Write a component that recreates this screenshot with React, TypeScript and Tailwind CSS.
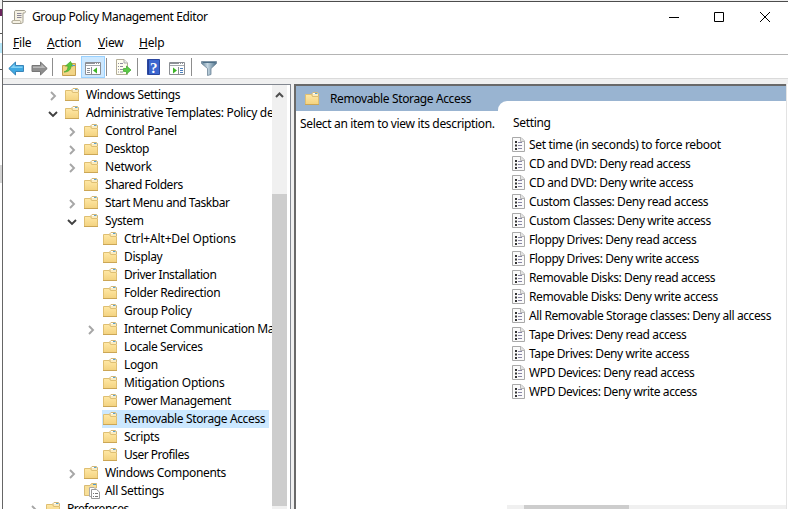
import React from 'react';

const Folder = () => (
  <svg width="14" height="14" viewBox="0 0 14 14" className="shrink-0">
    <defs>
      <linearGradient id="folderFill" x1="0" y1="0" x2="0" y2="1">
        <stop offset="0" stopColor="#ffe8a6" />
        <stop offset="1" stopColor="#f3d27f" />
      </linearGradient>
    </defs>
    <path d="M7 4V1.500L8 .5H12.500L13.500 1.500V4" fill="#faebc0" stroke="#d3b777" />
    <path d="M.5 2.500H6.500L7.500 4.500H13.500V12.500H.5Z" fill="url(#folderFill)" stroke="#dfbf72" />
    <path d="M8 1.500H10" stroke="#fff" />
    <path d="M10 1.500H12.500" stroke="#5ba3d0" />
    <path d="M0 12.500H14" stroke="#cba655" />
  </svg>
);

const SettingsFolder = () => (
  <svg width="17" height="16" viewBox="0 0 17 16" className="-mr-[3px] shrink-0">
    <path d="M.5 2.500H6L7.500.5H12.500V5H6V12.500H.5Z" fill="#f8df98" stroke="#d8bb76" />
    <path d="M9 1.500H12" stroke="#4c9bd2" />
    <path d="M5.500 4.500H10L12.500 7V13.500H5.500Z" fill="#fff" stroke="#aaa" />
    <path d="M7.500 6.500H12.500L15.500 9V15.500H7.500Z" fill="#fff" stroke="#999" />
    <path d="M9 10.500H10M11 10.500H14M9 13.500H10M11 13.500H14" stroke="#777" />
  </svg>
);

const Chevron = ({ open }: { open?: boolean }) =>
  open ? (
    <svg width="10" height="10" viewBox="0 0 10 10">
      <path d="M1 3L5 7L9 3" fill="none" stroke="#404040" strokeWidth="1.9" />
    </svg>
  ) : (
    <svg width="10" height="10" viewBox="0 0 10 10">
      <path d="M3 1L7 5L3 9" fill="none" stroke="#a6a6a6" strokeWidth="1.9" />
    </svg>
  );

const Sheet = () => (
  <svg width="13" height="15" viewBox="0 0 13 15" className="shrink-0">
    <path d="M.5.5H9L12.500 4V14.500H.5Z" fill="#fafafa" stroke="#a9a9a9" />
    <path d="M8.500.5V4.500H12.500" fill="#e4e4e4" stroke="#b5b5b5" />
    <path d="M3 5H5M3 8.500H5M3 12H5" stroke="#333" strokeWidth="2" />
    <path d="M6 5.500H10M6 8.500H10M6 11.500H10" stroke="#8987a5" />
  </svg>
);

type Node = { label: string; level: 0 | 1 | 2 | 3; arrow?: 'open' | 'closed'; spacing?: string; selected?: boolean; multi?: boolean };

const nodes: Node[] = [
  { label: 'Windows Settings', level: 1, arrow: 'closed' },
  { label: 'Administrative Templates: Policy definitions', level: 1, arrow: 'open', spacing: 'tracking-[-0.33px]' },
  { label: 'Control Panel', level: 2, arrow: 'closed', spacing: 'tracking-[-0.33px]' },
  { label: 'Desktop', level: 2, arrow: 'closed' },
  { label: 'Network', level: 2, arrow: 'closed', spacing: 'tracking-[-0.21px]' },
  { label: 'Shared Folders', level: 2, spacing: 'tracking-[-0.46px]' },
  { label: 'Start Menu and Taskbar', level: 2, arrow: 'closed', spacing: 'tracking-[-0.43px]' },
  { label: 'System', level: 2, arrow: 'open' },
  { label: 'Ctrl+Alt+Del Options', level: 3, spacing: 'tracking-[-0.16px]' },
  { label: 'Display', level: 3 },
  { label: 'Driver Installation', level: 3, spacing: 'tracking-[-0.46px]' },
  { label: 'Folder Redirection', level: 3 },
  { label: 'Group Policy', level: 3, spacing: 'tracking-[-0.3px]' },
  { label: 'Internet Communication Management', level: 3, arrow: 'closed', spacing: 'tracking-[-0.38px]' },
  { label: 'Locale Services', level: 3, spacing: 'tracking-[-0.42px]' },
  { label: 'Logon', level: 3 },
  { label: 'Mitigation Options', level: 3, spacing: 'tracking-[-0.27px]' },
  { label: 'Power Management', level: 3, spacing: 'tracking-[-0.46px]' },
  { label: 'Removable Storage Access', level: 3, selected: true },
  { label: 'Scripts', level: 3 },
  { label: 'User Profiles', level: 3, spacing: 'tracking-[-0.5px]' },
  { label: 'Windows Components', level: 2, arrow: 'closed', spacing: 'tracking-[-0.32px]' },
  { label: 'All Settings', level: 2, multi: true, spacing: 'tracking-[-0.3px]' },
  { label: 'Preferences', level: 0, arrow: 'closed', spacing: 'tracking-[-0.46px]' },
];

const indents = ['pl-[25px]', 'pl-[44px]', 'pl-[63px]', 'pl-[82px]'];

const settings = [
  'CD and DVD: Deny read access',
  'CD and DVD: Deny write access',
  'Custom Classes: Deny read access',
  'Custom Classes: Deny write access',
  'Floppy Drives: Deny read access',
  'Floppy Drives: Deny write access',
  'Removable Disks: Deny read access',
  'Removable Disks: Deny write access',
  'All Removable Storage classes: Deny all access',
  'Tape Drives: Deny read access',
  'Tape Drives: Deny write access',
  'WPD Devices: Deny read access',
  'WPD Devices: Deny write access',
];

const SettingRow = ({ label, spacing = 'tracking-[-0.395px]' }: { label: string; spacing?: string }) => (
  <div className="flex h-[19px] items-center gap-[4px] whitespace-nowrap pl-[5px]">
    <Sheet />
    <span className={spacing}>{label}</span>
  </div>
);

const Divider = () => <div className="h-[18px] w-px shrink-0 bg-[#8d8d8d]" />;

const WindowIcon = ({ flip }: { flip?: boolean }) => (
  <svg width="17" height="13" viewBox="0 0 17 13" className="shrink-0">
    <path d="M.5.5H15.500V12.500H.5Z" fill="#fff" stroke="#8c8f94" />
    <path d="M1 1.500H15" stroke="#8e9298" />
    <path d="M10 1.500H11M12 1.500H13M14 1.500H15" stroke="#fff" />
    <path d="M1 3.500H15" stroke="#a4a8ad" />
    {flip ? (
      <>
        <path d="M9.500 5V12" stroke="#8c8f94" />
        <path d="M4 5.500L8 8.500L4 11.500Z" fill="#3db526" />
        <path d="M11 6.500H14M11 8.500H14M11 10.500H14" stroke="#4a7fbd" />
      </>
    ) : (
      <>
        <path d="M6.500 5V12" stroke="#8c8f94" />
        <path d="M12 5.500L8 8.500L12 11.500Z" fill="#3db526" />
        <path d="M2 6.500H5M2 8.500H5M2 10.500H5" stroke="#8c8f94" />
      </>
    )}
  </svg>
);

function Toolbar() {
  return (
    <div className="flex h-[22px] shrink-0 items-center pl-[5px]">
      <svg width="17" height="15" viewBox="0 0 17 15" className="mt-[2px] shrink-0">
        <path d="M.8 7.500L7.500 1V4.500H15.500V10.500H7.500V14Z" fill="#3fa9e2" stroke="#3984b8" />
        <path d="M2.500 7L6.500 3.300V5.600H14.500V7Z" fill="#84d2f5" />
      </svg>
      <svg width="17" height="15" viewBox="0 0 17 15" className="ml-[6px] mt-[2px] shrink-0">
        <path d="M16.200 7.500L9.500 1V4.500H1V10.500H9.500V14Z" fill="#8e8e8e" stroke="#777" />
        <path d="M14.500 7L10.500 3.300V5.600H2V7Z" fill="#b9b9b9" />
      </svg>
      <div className="ml-[4px]"><Divider /></div>
      <svg width="15" height="15" viewBox="0 0 15 15" className="ml-[9px] mt-[2px] shrink-0">
        <path d="M.5 4.500H6L8 2.500H13.500V14.500H.5Z" fill="#efcf7d" stroke="#c5a052" />
        <path d="M1 13.500H13V6H1Z" fill="#f2d587" />
        <path d="M2 11C5 10 6 8 6 5H3.500L8.500 .5L11 5H9C9 8 7 11 2 11Z" fill="#59c83b" stroke="#46a531" strokeWidth=".7" />
        <path d="M10 4.500H13" stroke="#4c9bd2" />
      </svg>
      <div className="ml-[4px] flex h-[22px] w-[24px] shrink-0 items-center justify-center border border-[#99d1ff] bg-[#cce8ff] pl-px pt-[2px]">
        <WindowIcon />
      </div>
      <div className="ml-px"><Divider /></div>
      <svg width="17" height="16" viewBox="0 0 17 16" className="ml-[8px] shrink-0">
        <path d="M1.500.5H9L12.500 4V15.500H1.500Z" fill="#fffef0" stroke="#b4ae98" />
        <path d="M9 .5V4H12.500" fill="#eee" stroke="#aaa" />
        <path d="M3 4.500H4M5 4.500H8M3 7.500H4M5 7.500H8M3 10.500H4M5 10.500H8M3 13H4M5 13H8" stroke="#8f8ba0" />
        <path d="M8.500 9.500H11.500V7L16 11L11.500 15V12.500H8.500Z" fill="#5bcb48" stroke="#45ac32" strokeWidth=".8" />
      </svg>
      <div className="ml-[5px]"><Divider /></div>
      <svg width="13" height="16" viewBox="0 0 13 16" className="ml-[9px] shrink-0">
        <path d="M.5.5H12.500V15.500H.5Z" fill="#3b66cf" stroke="#2b479f" />
        <path d="M1.500 1V15" stroke="#233f96" />
        <text x="3" y="13.500" fill="#fff" fontSize="15" fontFamily="Liberation Serif, serif" fontWeight="700">?</text>
      </svg>
      <div className="ml-[9px] flex pt-[2px]"><WindowIcon flip /></div>
      <div className="ml-[5px]"><Divider /></div>
      <svg width="16" height="15" viewBox="0 0 16 15" className="ml-[9px] mt-[2px] shrink-0">
        <defs>
          <linearGradient id="funnel">
            <stop offset="0" stopColor="#5f8097" />
            <stop offset=".4" stopColor="#c5d7e2" />
            <stop offset="1" stopColor="#4a6e88" />
          </linearGradient>
        </defs>
        <path d="M.5.500H15.500V2.500L10 7.500V13.500L6.500 14.500V7.500L.5 2.500Z" fill="url(#funnel)" stroke="#6c8497" strokeWidth=".8" />
        <path d="M2 1.500H14" stroke="#4e6f88" />
      </svg>
    </div>
  );
}

function Tree() {
  return (
    <div className="flex w-[288px] shrink-0 border-t border-r border-[#828790] bg-white">
      <div className="flex w-[269px] shrink-0 flex-col overflow-hidden pt-px">
        {nodes.map((n) => (
          <div key={n.label} className={`flex h-[18px] shrink-0 items-center ${indents[n.level]}`}>
            <div className="flex w-[17px] shrink-0 pl-px pt-[2px]">{n.arrow && <Chevron open={n.arrow === 'open'} />}</div>
            <div className={`flex h-full items-center gap-[4px] whitespace-nowrap pl-px pr-[4px] ${n.selected ? 'bg-[#cce8ff]' : ''}`}>
              {n.multi ? <SettingsFolder /> : <Folder />}
              <span className={`pl-[3px] leading-[18px] ${n.spacing ?? 'tracking-[-0.37px]'}`}>{n.label}</span>
            </div>
          </div>
        ))}
      </div>
      <div className="flex w-[15px] shrink-0 flex-col bg-[#f0f0f0]">
        <svg width="15" height="20" viewBox="0 0 15 20">
          <path d="M4 12L7.500 8.500L11 12" fill="none" stroke="#505050" strokeWidth="2" />
        </svg>
        <div className="mt-[89px] h-[312px] bg-[#cdcdcd]" />
      </div>
    </div>
  );
}

function Details() {
  return (
    <div className="flex min-w-0 grow flex-col border-l-2 border-t-2 border-[#696969] bg-white">
      <div className="flex h-[25px] shrink-0 bg-[#99b4d1]">
        <div className="flex w-[202px] shrink-0 items-center pl-[9px]">
          <Folder />
          <span className="whitespace-nowrap pl-[11px] tracking-[-0.37px]">Removable Storage Access</span>
        </div>
        <div className="mt-[15px] h-[10px] grow rounded-tl-[9px] bg-white" />
      </div>
      <div className="flex grow">
        <div className="w-[211px] shrink-0 whitespace-nowrap pl-[4px] pt-[4px] leading-[18px] tracking-[-0.34px]">Select an item to view its description.</div>
        <div className="flex min-w-0 grow flex-col">
          <div className="h-[24px] pl-[6px] pt-[3px] leading-[18px] tracking-[-0.32px]">Setting</div>
          <SettingRow label="Set time (in seconds) to force reboot" spacing="tracking-[-0.32px]" />
          {settings.map((s) => (
            <SettingRow key={s} label={s} />
          ))}
          <div className="mt-auto flex h-[4px] bg-[#f0f0f0] pl-[17px]">
            <div className="w-[105px] bg-[#cdcdcd]" />
          </div>
        </div>
      </div>
    </div>
  );
}

export default function App() {
  return (
    <div className="flex h-[509px] w-[788px] overflow-hidden bg-white font-['Noto_Sans','Open_Sans',sans-serif] text-[12px] tracking-[-0.21px] text-black">
      <div className="flex w-[2px] shrink-0 flex-col bg-white">
        <div className="h-[9px] bg-[#f3f3f3]" />
        <div className="h-[7px] bg-[#6a245d]" />
        <div className="mt-[17px] h-px bg-[#555]" />
        <div className="mt-[9px] h-[10px] bg-[#b5e7fa]" />
        <div className="mt-[16px] h-px bg-[#555]" />
        <div className="mt-[95px] h-[18px] bg-[#d5d5d5]" />
      </div>
      <div className="flex min-w-0 grow flex-col border-l border-[#666]">
        <div className="h-px shrink-0 bg-[#f0f0f0]" />
        <div className="h-px shrink-0 bg-[#4c4c4c]" />
        <div className="flex h-[30px] shrink-0 items-center pl-[8px]">
          <svg width="16" height="16" viewBox="0 0 16 16" className="shrink-0">
            <path d="M4.500 1.500H13C15 1.500 15 4 13 4H12V12.500C12 14 11 14.500 10 14.500H2C.5 14.500.5 11.500 2 11.500H3.500V3C3.500 2 4 1.500 4.500 1.500Z" fill="#f5f1e3" stroke="#a39f90" />
            <path d="M2 11.500H9C10 12 10 14 9.500 14.500" fill="none" stroke="#b8b19c" />
            <path d="M6 4.500H10.500M6 6.500H10.500M6 8.500H10.500" stroke="#8b8799" />
          </svg>
          <span className="grow pl-[5px] tracking-[-0.37px]">Group Policy Management Editor</span>
          <svg width="120" height="12" viewBox="0 0 120 12" className="shrink-0">
            <path d="M1 6.500H11M46.500 1.500H55.500V10.500H46.500ZM92 1L102 11M102 1L92 11" fill="none" stroke="#000" />
          </svg>
        </div>
        <div className="flex h-[22px] shrink-0 items-center pl-[10px]">
          <span className="w-[34px]"><u>F</u>ile</span>
          <span className="w-[51px]"><u>A</u>ction</span>
          <span className="w-[41px]"><u>V</u>iew</span>
          <span><u>H</u>elp</span>
        </div>
        <div className="h-px shrink-0 bg-[#b4b4b4]" />
        <div className="h-px shrink-0 bg-white" />
        <Toolbar />
        <div className="h-px shrink-0 bg-[#dadada]" />
        <div className="flex min-h-0 grow bg-[#f0f0f0] pt-[5px]">
          <Tree />
          <div className="w-[3px] shrink-0" />
          <Details />
          <div className="w-[2px] shrink-0 border-r border-white bg-[#e3e3e3]" />
        </div>
      </div>
    </div>
  );
}
